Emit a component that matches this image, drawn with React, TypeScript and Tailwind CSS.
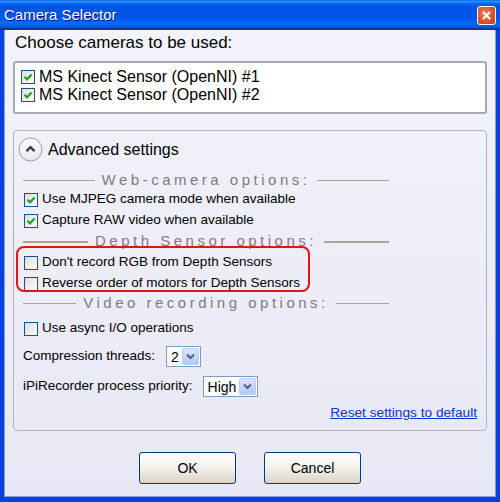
import React from 'react';

const font = "font-['Liberation_Sans',Arial,sans-serif]";

function Check({ checked }: { checked?: boolean }) {
    return (
        <span className="w-[14px] h-[14px] shrink-0 border border-[#1c5180] bg-gradient-to-br from-[#dcdcd7] to-[#ffffff] flex items-center justify-center">
            {checked && (
                <svg width="10" height="10" viewBox="0 0 10 10">
                    <path d="M1.5 4.8 L4 7.3 L8.6 2.4" fill="none" stroke="#21a121" strokeWidth="2.2" />
                </svg>
            )}
        </span>
    );
}

function CheckRow({ label, checked, big }: { label: string; checked?: boolean; big?: boolean }) {
    return (
        <div className={`flex items-center gap-[4px] ${big ? 'h-[18px] text-[16px]' : 'h-[21px] text-[13.5px] pl-[10px]'} text-black`}>
            <Check checked={checked} />
            <span className="whitespace-nowrap">{label}</span>
        </div>
    );
}

function SectionHeader({ label, h, thick }: { label: string; h: string; thick?: boolean }) {
    return (
        <div className={`flex items-center ml-[9px] w-[366px] ${h}`}>
            <div className={`flex-1 ${thick ? 'h-[2px] bg-[#aca899]' : 'h-px bg-[#a8a496]'}`} />
            <span className="px-[7px] text-[15px] tracking-[3.5px] text-[#7c7c7c] whitespace-nowrap">{label}</span>
            <div className={`flex-1 ${thick ? 'h-[2px] bg-[#aca899]' : 'h-px bg-[#a8a496]'}`} />
        </div>
    );
}

function Combo({ value, width }: { value: string; width: string }) {
    return (
        <div className={`${width} h-[21px] border border-[#7f9db9] bg-white flex items-center pr-[1px]`}>
            <span className="flex-1 pl-[4px] text-[14px] leading-none">{value}</span>
            <span className="w-[17px] h-[17px] rounded-[2px] border border-[#b9cdf6] bg-gradient-to-b from-[#dbe6fd] to-[#b3c7f5] flex items-center justify-center">
                <svg width="9" height="7" viewBox="0 0 9 7">
                    <path d="M1 1.5 L4.5 5 L8 1.5" fill="none" stroke="#4d6185" strokeWidth="2" />
                </svg>
            </span>
        </div>
    );
}

function XpButton({ label }: { label: string }) {
    return (
        <button className="w-[97px] h-[32px] rounded-[3px] border border-[#003c74] bg-gradient-to-b from-[#ffffff] via-[#f1f0ea] to-[#d9d4c8] text-[14px] text-black">
            {label}
        </button>
    );
}

export default function App() {
    return (
        <div className={`w-[500px] h-[502px] flex flex-col bg-[#0842dc] ${font}`}>
            {/* title bar */}
            <div className="h-[30px] shrink-0 px-[4px] flex items-center justify-between bg-[linear-gradient(to_bottom,#0058ee_0%,#3593ff_4%,#288eff_6%,#127dff_8%,#036ffc_10%,#0262ee_14%,#0057e5_20%,#0054e3_24%,#0055eb_56%,#005bf5_66%,#026afe_76%,#0062ef_86%,#0052d6_92%,#0040ab_94%,#003092_100%)]">
                <span className="text-white text-[15px] leading-[30px] [text-shadow:1px_1px_#0f1089]">Camera Selector</span>
                <span className="w-[19px] h-[19px] rounded-[3px] border border-white bg-[radial-gradient(circle_at_40%_40%,#f08a6a_0%,#e0502a_55%,#c13a12_100%)] flex items-center justify-center">
                    <svg width="9" height="9" viewBox="0 0 9 9">
                        <path d="M1 1 L8 8 M8 1 L1 8" stroke="white" strokeWidth="2" />
                    </svg>
                </span>
            </div>

            {/* frame + client */}
            <div className="flex-1 flex px-[4px] pb-[5px]">
                <div className="flex-1 flex flex-col bg-gradient-to-b from-[#f3f3fb] to-[#e8e7f5] border-x border-b border-[#0019a0]/40">
                    <div className="mt-[3px] h-[20px] leading-[20px] pl-[10px] text-[17px] text-black">Choose cameras to be used:</div>

                    <div className="mt-[8px] mx-[8px] h-[53px] rounded-[3px] border-2 border-[#a9a9a9] bg-white pt-[5px] pl-[6px]">
                        <CheckRow big checked label="MS Kinect Sensor (OpenNI) #1" />
                        <CheckRow big checked label="MS Kinect Sensor (OpenNI) #2" />
                    </div>

                    <div className="relative mt-[16px] mx-[8px] h-[301px] rounded-[4px] border border-[#b4b4b4] flex flex-col">
                        <div className="mt-[6px] h-[25px] pl-[4px] flex items-center gap-[5px]">
                            <svg width="25" height="25" viewBox="0 0 25 25">
                                <defs>
                                    <linearGradient id="exp" x1="0" y1="0" x2="0" y2="1">
                                        <stop offset="0" stopColor="#ffffff" />
                                        <stop offset="1" stopColor="#e6e6ee" />
                                    </linearGradient>
                                </defs>
                                <circle cx="12.5" cy="12.5" r="11.5" fill="url(#exp)" stroke="#9d9d9d" strokeWidth="1" />
                                <path d="M8.5 14.2 L12.5 10.2 L16.5 14.2" fill="none" stroke="#3c3c3c" strokeWidth="2.4" />
                            </svg>
                            <span className="text-[16px] text-black">Advanced settings</span>
                        </div>

                        <SectionHeader label="Web-camera options:" h="mt-[9px] h-[18px]" />
                        <CheckRow checked label="Use MJPEG camera mode when available" />
                        <CheckRow checked label="Capture RAW video when available" />

                        <SectionHeader label="Depth Sensor options:" h="h-[21px]" thick />
                        <CheckRow label="Don't record RGB from Depth Sensors" />
                        <CheckRow label="Reverse order of motors for Depth Sensors" />

                        <SectionHeader label="Video recording options:" h="h-[18px]" />
                        <div className="mt-[6px]">
                            <CheckRow label="Use async I/O operations" />
                        </div>

                        <div className="mt-[7px] h-[21px] pl-[9px] flex items-center gap-[11px] text-[13.5px]">
                            <span>Compression threads:</span>
                            <Combo value="2" width="w-[35px]" />
                        </div>
                        <div className="mt-[9px] h-[21px] pl-[9px] flex items-center gap-[10px] text-[13.5px]">
                            <span>iPiRecorder process priority:</span>
                            <Combo value="High" width="w-[55px]" />
                        </div>

                        <div className="mt-[7px] h-[18px] pr-[9px] flex items-center justify-end">
                            <a href="#" className="text-[13.7px] text-[#0b33d4] underline">Reset settings to default</a>
                        </div>

                        {/* highlight annotation */}
                        <div className="absolute left-[2px] top-[115px] w-[294px] h-[46px] rounded-[8px] border-2 border-[#e8101a] pointer-events-none" />
                    </div>

                    <div className="mt-[21px] flex justify-center gap-[28px]">
                        <XpButton label="OK" />
                        <XpButton label="Cancel" />
                    </div>
                </div>
            </div>
        </div>
    );
}
